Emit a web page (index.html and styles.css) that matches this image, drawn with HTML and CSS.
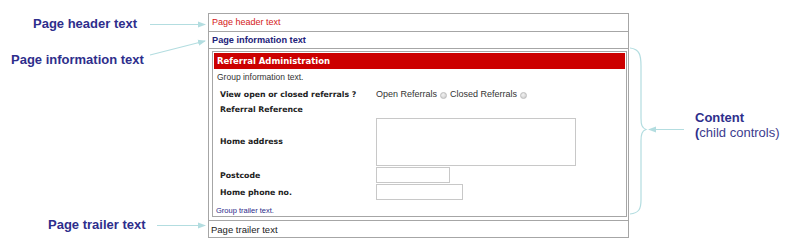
FILE: index.html
```html
<!DOCTYPE html>
<html>
<head>
<meta charset="utf-8">
<link rel="stylesheet" href="styles.css">
</head>
<body>
<div class="page">
  <div class="notes-left">
    <div class="note note-header">Page header text</div>
    <div class="note note-info">Page information text</div>
    <div class="note note-trailer">Page trailer text</div>
  </div>
  <div class="panel">
    <div class="row-header">Page header text</div>
    <div class="row-info">Page information text</div>
    <div class="content">
      <div class="group">
        <div class="group-title">Referral Administration</div>
        <div class="group-info">Group information text.</div>
        <div class="form">
          <div class="label r1">View open or closed referrals ?</div>
          <div class="value r1">Open Referrals <span class="radio"></span> Closed Referrals <span class="radio"></span></div>
          <div class="label r2">Referral Reference</div>
          <div class="value r2"></div>
          <div class="label r3">Home address</div>
          <div class="value r3"><div class="textarea"></div></div>
          <div class="label r4">Postcode</div>
          <div class="value r4"><div class="input postcode"></div></div>
          <div class="label r5">Home phone no.</div>
          <div class="value r5"><div class="input phone"></div></div>
        </div>
        <div class="group-trailer">Group trailer text.</div>
      </div>
    </div>
    <div class="row-trailer">Page trailer text</div>
  </div>
  <div class="notes-right">
    <div class="note-content"><b>Content</b><br><span class="paren">(</span>child controls)</div>
  </div>
  <svg class="overlay" width="786" height="243" viewBox="0 0 786 243">
    <defs>
      <marker id="ah" markerWidth="8" markerHeight="8" refX="7" refY="4" orient="auto" markerUnits="userSpaceOnUse">
        <path d="M0,1 L8,4 L0,7 Z" fill="#b3dde0"/>
      </marker>
    </defs>
    <g stroke="#b3dde0" stroke-width="1.2" fill="none">
      <line x1="150" y1="24.5" x2="205" y2="24.5" marker-end="url(#ah)"/>
      <line x1="150" y1="55" x2="205" y2="41" marker-end="url(#ah)"/>
      <line x1="157" y1="225.5" x2="205" y2="225.5" marker-end="url(#ah)"/>
      <line x1="684" y1="129.5" x2="649" y2="129.5" marker-end="url(#ah)"/>
      <path d="M630,48 C640,49 641,56 641,66 L641,118 C641,125 642,128 646,129.5 C642,131 641,134 641,141 L641,200 C641,209 639,213 630,214"/>
    </g>
  </svg>
</div>
</body>
</html>
```

FILE: styles.css
```css
* { box-sizing: border-box; }
html, body { margin: 0; padding: 0; background: #fff; }
.page {
  position: relative;
  width: 786px;
  height: 243px;
  display: flex;
  font-family: "Liberation Sans", Arial, sans-serif;
}
.notes-left {
  width: 208px;
  flex: none;
  display: flex;
  flex-direction: column;
  align-items: flex-start;
}
.note {
  font-family: "Liberation Sans", Arial, sans-serif;
  font-weight: bold;
  font-size: 13px;
  line-height: 16px;
  color: #2e2e8c;
}
.note-header { margin: 16px 0 0 33px; }
.note-info { margin: 20px 0 0 11px; }
.note-trailer { margin: 149px 0 0 48px; }

.panel {
  width: 421px;
  flex: none;
  margin-top: 13px;
  height: 225px;
  border: 1px solid #a6a6a6;
  display: flex;
  flex-direction: column;
}
.row-header {
  height: 18px;
  border-bottom: 1px solid #a6a6a6;
  color: #d42020;
  font-size: 9px;
  line-height: 17px;
  padding-left: 3px;
}
.row-info {
  height: 17px;
  border-bottom: 1px solid #a6a6a6;
  color: #22227a;
  font-size: 9.2px;
  font-weight: bold;
  line-height: 16px;
  padding-left: 3px;
}
.content {
  padding: 2px 1px 3px 3px;
}
.group {
  border: 1px solid #a6a6a6;
  padding: 1px;
  height: 166px;
}
.group-title {
  background: #cc0000;
  color: #fff;
  font-family: "DejaVu Sans", Verdana, sans-serif;
  font-weight: bold;
  font-size: 8.5px;
  height: 16px;
  line-height: 16px;
  padding-left: 3px;
}
.group-info {
  font-size: 8.5px;
  color: #333;
  line-height: 16px;
  padding-left: 3px;
}
.form {
  display: grid;
  grid-template-columns: 156px 1fr;
  grid-template-rows: 14px 14px 49px 16px 16px;
  row-gap: 1px;
  margin-top: 2px;
  padding-left: 6px;
}
.label {
  font-family: "DejaVu Sans", Verdana, sans-serif;
  font-weight: bold;
  font-size: 7.8px;
  color: #222;
  align-self: center;
}
.value {
  font-size: 9px;
  color: #333;
  align-self: center;
  display: flex;
  align-items: center;
  gap: 2px;
}
.radio {
  display: inline-block;
  width: 7px;
  height: 7px;
  border-radius: 50%;
  border: 1px solid #bdbdbd;
  background: radial-gradient(circle at 40% 35%, #f2f2f2, #c9c9c9);
  margin: 2px 1px 0 1px;
}
.textarea {
  width: 200px;
  height: 48px;
  border: 1px solid #c8c8c8;
}
.input {
  height: 16px;
  border: 1px solid #c8c8c8;
}
.postcode { width: 74px; }
.phone { width: 87px; }
.group-trailer {
  font-size: 7.5px;
  color: #2a2a8a;
  padding-left: 2px;
  margin-top: 6px;
}
.row-trailer {
  height: 19px;
  border-top: 1px solid #a6a6a6;
  font-size: 9.5px;
  color: #222;
  line-height: 17px;
  padding-left: 2px;
}
.notes-right {
  flex: 1;
  padding: 110px 0 0 66px;
}
.note-content {
  font-size: 13px;
  line-height: 15px;
  color: #3c3c8e;
}
.note-content b, .note-content .paren { color: #2e2e8c; font-weight: bold; }
.overlay {
  position: absolute;
  left: 0;
  top: 0;
  pointer-events: none;
}
```
